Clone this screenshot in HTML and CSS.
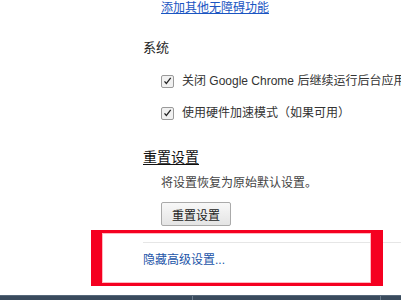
FILE: index.html
```html
<!DOCTYPE html>
<html lang="zh-CN">
<head>
<meta charset="utf-8">
<link rel="stylesheet" href="styles.css">
</head>
<body>
<div class="screen">
  <div class="content">
    <div class="indent top-link"><a class="link" href="#">添加其他无障碍功能</a></div>
    <div class="section-title">系统</div>
    <div class="indent check-row row1">
      <svg class="cb" width="13" height="13" viewBox="0 0 13 13"><rect x="0.5" y="0.5" width="12" height="12" rx="1.5" fill="#f1f1f1" stroke="#9a9a9a"/><path d="M3 6.8 L5.4 9.4 L10.2 3.2 L9.2 2.6 L5.3 7.6 L4 5.9 Z" fill="#222"/></svg>
      <span class="label">关闭 Google Chrome 后继续运行后台应用</span>
    </div>
    <div class="indent check-row row2">
      <svg class="cb" width="13" height="13" viewBox="0 0 13 13"><rect x="0.5" y="0.5" width="12" height="12" rx="1.5" fill="#f1f1f1" stroke="#9a9a9a"/><path d="M3 6.8 L5.4 9.4 L10.2 3.2 L9.2 2.6 L5.3 7.6 L4 5.9 Z" fill="#222"/></svg>
      <span class="label">使用硬件加速模式（如果可用）</span>
    </div>
    <div class="heading">重置设置</div>
    <div class="indent desc">将设置恢复为原始默认设置。</div>
    <div class="indent"><button class="btn">重置设置</button></div>
    <div class="separator"></div>
    <div class="bottom-link"><a class="link2" href="#">隐藏高级设置...</a></div>
  </div>
  <div class="taskbar"><span class="tb-div d1"></span><span class="tb-div d2"></span></div>
  <div class="annot"></div>
</div>
</body>
</html>
```
FILE: styles.css
```css
html, body {
  margin: 0;
  padding: 0;
  background: #fff;
}
body {
  font-family: "Liberation Sans", "Noto Sans CJK SC", sans-serif;
  color: #333;
  overflow: hidden;
}
.screen {
  position: relative;
  width: 401px;
  height: 300px;
  display: flex;
  flex-direction: column;
  overflow: hidden;
}
.content {
  flex: 1;
  padding-left: 143px;
}
.indent {
  margin-left: 18px;
}
.top-link {
  height: 16px;
  line-height: 16px;
  font-size: 12px;
}
.link {
  color: #1a55c2;
  text-decoration: underline;
}
.section-title {
  margin-top: 23px;
  font-size: 13px;
  line-height: 18px;
  height: 18px;
  color: #222;
}
.check-row {
  display: flex;
  align-items: center;
  height: 16px;
  white-space: nowrap;
}
.row1 {
  margin-top: 16px;
}
.row2 {
  margin-top: 16px;
}
.cb {
  flex: none;
  margin-right: 8px;
}
.label {
  font-size: 12px;
  line-height: 16px;
  color: #333;
}
.heading {
  margin-top: 26px;
  font-size: 14px;
  line-height: 20px;
  height: 20px;
  color: #111;
  text-decoration: underline;
  text-underline-offset: 2px;
}
.desc {
  margin-top: 8px;
  font-size: 12px;
  line-height: 16px;
  height: 16px;
  color: #444;
}
.btn {
  margin-top: 11px;
  width: 70px;
  height: 24px;
  padding: 0;
  font-family: "Liberation Sans", "Noto Sans CJK SC", sans-serif;
  font-size: 12px;
  color: #222;
  border: 1px solid #aaa;
  border-radius: 2px;
  background: linear-gradient(#f8f8f8, #e4e4e4);
  display: block;
}
.separator {
  margin-top: 16px;
  height: 1px;
  background: #e6e6e6;
}
.bottom-link {
  margin-top: 9px;
  font-size: 12px;
  line-height: 16px;
  height: 16px;
}
.link2 {
  color: #2355a8;
  text-decoration: none;
}
.taskbar {
  position: relative;
  height: 4px;
  background: #3a4b5d;
  border-top: 1px solid #56687a;
  flex: none;
}
.tb-div {
  position: absolute;
  top: 0;
  width: 1px;
  height: 4px;
  background: #6a7b8c;
}
.d1 { left: 192px; }
.d2 { left: 380px; }
.annot {
  position: absolute;
  left: 91px;
  top: 230px;
  width: 269px;
  height: 50px;
  border-style: solid;
  border-color: #f50020;
  border-width: 3px 12px 3px 11px;
  box-shadow: inset 0 0 0 1px #ffb8c0;
}
```
